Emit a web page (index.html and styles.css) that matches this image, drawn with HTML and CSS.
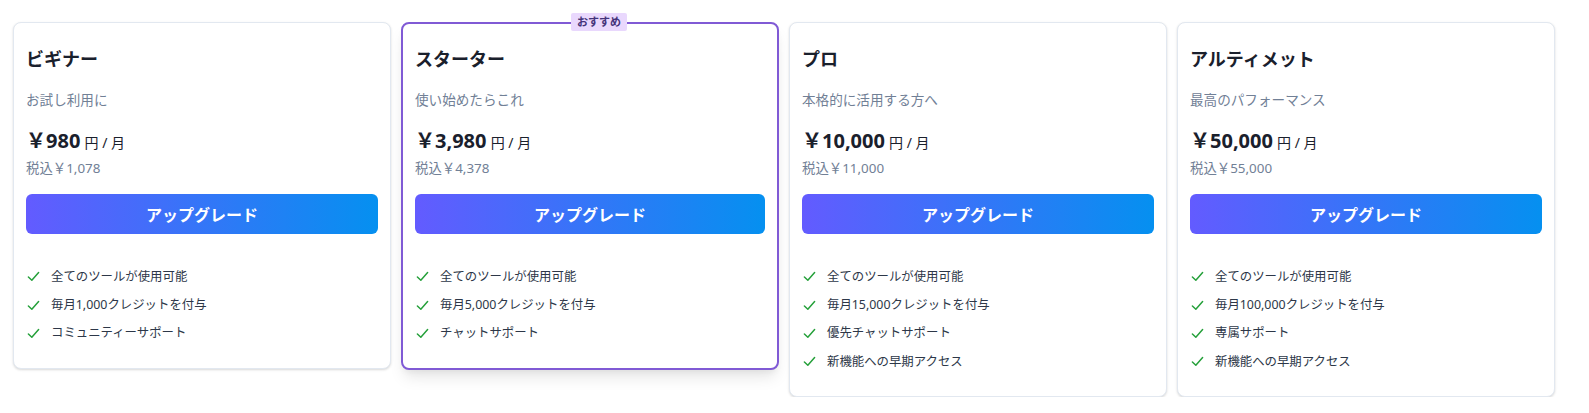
FILE: index.html
```html
<!DOCTYPE html>
<html>
  <head>
    <link rel="stylesheet" href="styles.css">
  </head>
  <body>
    <div class="plans">

      <div class="plan">
        <h2 class="plan-name">ビギナー</h2>
        <p class="plan-desc">お試し利用に</p>
        <p class="plan-price"><span class="price-num">￥980</span> <span class="price-unit">円 / 月</span></p>
        <p class="plan-tax">税込￥1,078</p>
        <button class="upgrade-button">アップグレード</button>
        <ul class="features">
          <li><svg class="check" viewBox="0 0 14 14"><polyline points="1.5,7.5 5.2,11 12.5,2.8"/></svg>全てのツールが使用可能</li>
          <li><svg class="check" viewBox="0 0 14 14"><polyline points="1.5,7.5 5.2,11 12.5,2.8"/></svg>毎月1,000クレジットを付与</li>
          <li><svg class="check" viewBox="0 0 14 14"><polyline points="1.5,7.5 5.2,11 12.5,2.8"/></svg>コミュニティーサポート</li>
        </ul>
      </div>

      <div class="plan plan-featured">
        <span class="badge">おすすめ</span>
        <h2 class="plan-name">スターター</h2>
        <p class="plan-desc">使い始めたらこれ</p>
        <p class="plan-price"><span class="price-num">￥3,980</span> <span class="price-unit">円 / 月</span></p>
        <p class="plan-tax">税込￥4,378</p>
        <button class="upgrade-button">アップグレード</button>
        <ul class="features">
          <li><svg class="check" viewBox="0 0 14 14"><polyline points="1.5,7.5 5.2,11 12.5,2.8"/></svg>全てのツールが使用可能</li>
          <li><svg class="check" viewBox="0 0 14 14"><polyline points="1.5,7.5 5.2,11 12.5,2.8"/></svg>毎月5,000クレジットを付与</li>
          <li><svg class="check" viewBox="0 0 14 14"><polyline points="1.5,7.5 5.2,11 12.5,2.8"/></svg>チャットサポート</li>
        </ul>
      </div>

      <div class="plan">
        <h2 class="plan-name">プロ</h2>
        <p class="plan-desc">本格的に活用する方へ</p>
        <p class="plan-price"><span class="price-num">￥10,000</span> <span class="price-unit">円 / 月</span></p>
        <p class="plan-tax">税込￥11,000</p>
        <button class="upgrade-button">アップグレード</button>
        <ul class="features">
          <li><svg class="check" viewBox="0 0 14 14"><polyline points="1.5,7.5 5.2,11 12.5,2.8"/></svg>全てのツールが使用可能</li>
          <li><svg class="check" viewBox="0 0 14 14"><polyline points="1.5,7.5 5.2,11 12.5,2.8"/></svg>毎月15,000クレジットを付与</li>
          <li><svg class="check" viewBox="0 0 14 14"><polyline points="1.5,7.5 5.2,11 12.5,2.8"/></svg>優先チャットサポート</li>
          <li><svg class="check" viewBox="0 0 14 14"><polyline points="1.5,7.5 5.2,11 12.5,2.8"/></svg>新機能への早期アクセス</li>
        </ul>
      </div>

      <div class="plan">
        <h2 class="plan-name">アルティメット</h2>
        <p class="plan-desc">最高のパフォーマンス</p>
        <p class="plan-price"><span class="price-num">￥50,000</span> <span class="price-unit">円 / 月</span></p>
        <p class="plan-tax">税込￥55,000</p>
        <button class="upgrade-button">アップグレード</button>
        <ul class="features">
          <li><svg class="check" viewBox="0 0 14 14"><polyline points="1.5,7.5 5.2,11 12.5,2.8"/></svg>全てのツールが使用可能</li>
          <li><svg class="check" viewBox="0 0 14 14"><polyline points="1.5,7.5 5.2,11 12.5,2.8"/></svg>毎月100,000クレジットを付与</li>
          <li><svg class="check" viewBox="0 0 14 14"><polyline points="1.5,7.5 5.2,11 12.5,2.8"/></svg>専属サポート</li>
          <li><svg class="check" viewBox="0 0 14 14"><polyline points="1.5,7.5 5.2,11 12.5,2.8"/></svg>新機能への早期アクセス</li>
        </ul>
      </div>

    </div>
  </body>
</html>
```

FILE: styles.css
```css
body{
  margin: 0;
  background-color: white;
  font-family: "Noto Sans", "Noto Sans CJK JP", sans-serif;
  color: #1a202c;
}
.plans{
  display: grid;
  grid-template-columns: repeat(4, 378px);
  gap: 10px;
  align-items: start;
  padding: 22px 0 0 13px;
}
.plan{
  position: relative;
  background-color: white;
  border: 1px solid #e2e8f0;
  border-radius: 8px;
  padding: 24px 12px 20px 12px;
  box-shadow: 0 1px 3px rgba(0, 0, 0, 0.1), 0 1px 2px rgba(0, 0, 0, 0.06);
}
.plan-featured{
  border: 2px solid #805ad5;
  padding: 23px 12px 20px 12px;
  box-shadow: 0 10px 15px -3px rgba(0, 0, 0, 0.1), 0 4px 6px -2px rgba(0, 0, 0, 0.05);
}
.badge{
  position: absolute;
  top: -11px;
  left: 168px;
  background-color: #e9d8fd;
  color: #44337a;
  font-size: 11px;
  font-weight: bold;
  line-height: 18px;
  padding: 0 6px;
  border-radius: 2px;
}
.plan-name{
  margin: 0;
  font-size: 18px;
  line-height: 24px;
  font-weight: bold;
}
.plan-desc{
  margin: 19px 0 0 0;
  font-size: 13.6px;
  line-height: 20px;
  color: #718096;
}
.plan-price{
  margin: 17px 0 0 0;
  line-height: 28px;
}
.price-num{
  font-size: 20px;
  font-weight: bold;
}
.price-unit{
  font-size: 14px;
}
.plan-tax{
  margin: 2px 0 0 0;
  font-size: 13.4px;
  line-height: 18px;
  color: #718096;
}
.upgrade-button{
  display: block;
  width: 100%;
  margin-top: 17px;
  height: 40px;
  border: none;
  border-radius: 6px;
  background: linear-gradient(90deg, #635bff, #0590f0);
  color: white;
  font-family: inherit;
  font-size: 16px;
  font-weight: bold;
  cursor: pointer;
}
.features{
  list-style: none;
  margin: 28.5px 0 0 0;
  padding: 0;
}
.features li{
  display: flex;
  align-items: center;
  font-size: 12.4px;
  line-height: 28.4px;
  color: #2d3748;
}
.check{
  width: 13px;
  height: 13px;
  margin: 0 11px 0 1px;
  fill: none;
  stroke: #25a03a;
  stroke-width: 1.6;
  stroke-linecap: round;
  stroke-linejoin: round;
}
```
